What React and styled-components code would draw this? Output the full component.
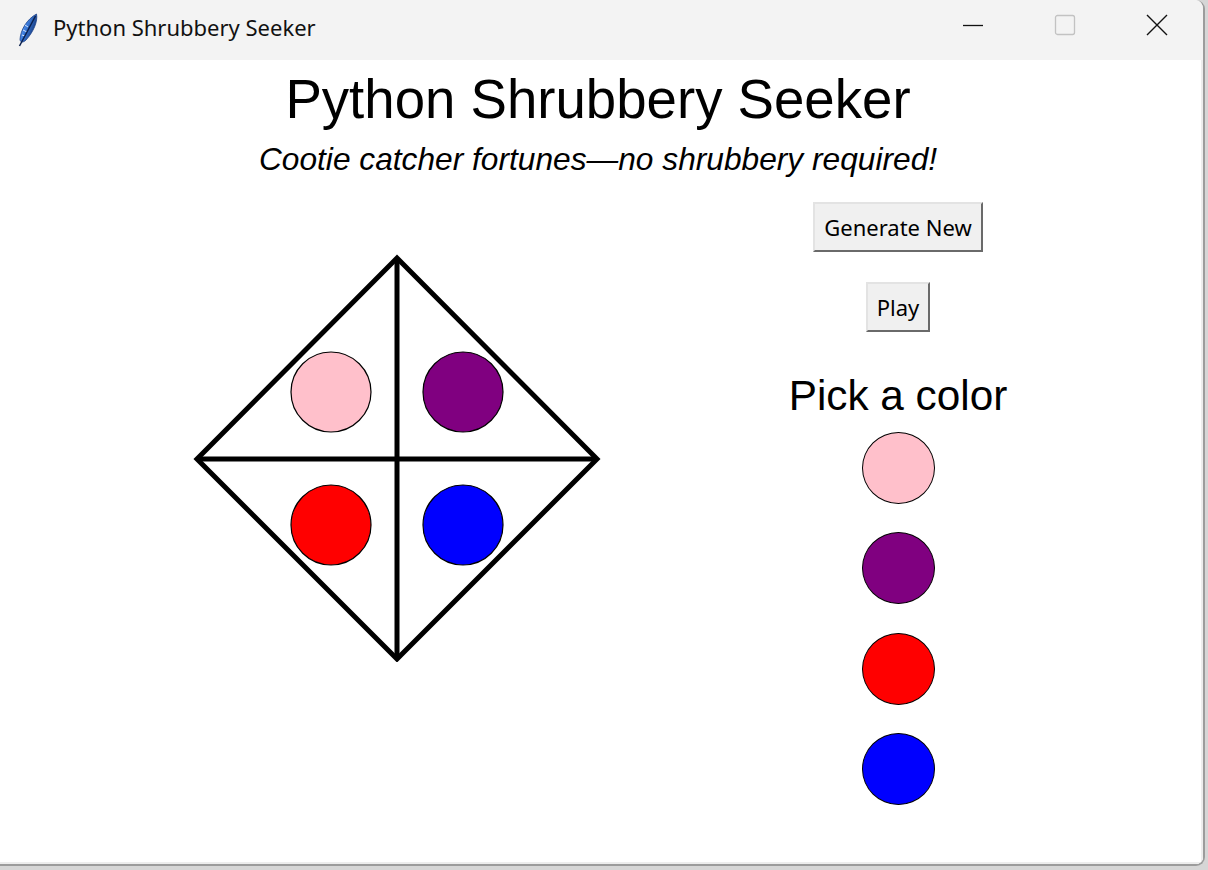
import React from "react";
import styled, { createGlobalStyle } from "styled-components";

const Global = createGlobalStyle`
  html, body { margin: 0; padding: 0; }
  body {
    width: 1208px;
    height: 870px;
    overflow: hidden;
    background: #d6d6d6;
    font-family: "Liberation Sans", Arial, sans-serif;
  }
`;

const Window = styled.div`
  width: 1203px;
  height: 864px;
  border-right: 2px solid #9c9c9c;
  border-bottom: 2px solid #9c9c9c;
  border-radius: 0 9px 9px 0;
  overflow: hidden;
  display: flex;
  flex-direction: column;
  background: #f3f3f3;
`;

const TitleBar = styled.div`
  height: 60px;
  flex: none;
  display: flex;
  align-items: center;
  background: #f3f3f3;
  padding-left: 16px;
`;

const TitleText = styled.span`
  font-family: "Noto Sans", "Open Sans", sans-serif;
  font-size: 22px;
  color: #111;
  margin-left: 15px;
  margin-top: -7px;
`;

const Controls = styled.div`
  margin-left: auto;
  display: flex;
  height: 100%;
`;

const Ctrl = styled.div`
  width: 92px;
  height: 100%;
  display: flex;
  align-items: center;
  justify-content: center;
  padding-bottom: 10px;
  box-sizing: border-box;
`;

const Client = styled.div`
  flex: 1;
  background: #ffffff;
  border-right: 2px solid #ededed;
  border-bottom: 2px solid #ededed;
  padding-right: 5px;
  display: flex;
  flex-direction: column;
  align-items: center;
`;

const Heading = styled.h1`
  margin: 9px 0 0 0;
  font-family: "Liberation Sans", Arial, sans-serif;
  font-weight: normal;
  font-size: 54.6px;
  line-height: 61px;
  color: #000;
`;

const Subtitle = styled.p`
  margin: 11px 0 0 0;
  font-family: "Liberation Sans", Arial, sans-serif;
  font-style: italic;
  font-size: 31.7px;
  line-height: 37px;
  color: #000;
`;

const Row = styled.div`
  align-self: stretch;
  display: flex;
  align-items: flex-start;
`;

const CanvasBox = styled.div`
  padding: 76px 0 0 193px;
`;

const Side = styled.div`
  margin-left: 147px;
  width: 300px;
  padding-top: 24px;
  display: flex;
  flex-direction: column;
  align-items: center;
`;

const TkButton = styled.button`
  height: 50px;
  box-sizing: border-box;
  padding: 0 9px;
  margin-top: ${(p) => p.$mt || 0}px;
  background: #f0f0f0;
  border: 2px solid;
  border-color: #e3e3e3 #6a6a6a #6a6a6a #e3e3e3;
  font-family: "Noto Sans", "Open Sans", sans-serif;
  font-size: 22px;
  color: #000;
  display: flex;
  align-items: center;
  justify-content: center;
  cursor: pointer;
`;

const PickLabel = styled.div`
  margin-top: 39px;
  font-family: "Liberation Sans", Arial, sans-serif;
  font-size: 42.3px;
  line-height: 49px;
  color: #000;
`;

const Swatches = styled.div`
  margin-top: 12px;
  display: flex;
  flex-direction: column;
  gap: 28.3px;
`;

const Swatch = styled.div`
  width: 73px;
  height: 72px;
  box-sizing: border-box;
  border-radius: 50%;
  border: 1px solid #000;
  background: ${(p) => p.$c};
`;

const Feather = () => (
  <svg width="22" height="34" viewBox="0 0 22 34">
    <defs>
      <linearGradient id="fg" x1="0" y1="0" x2="1" y2="0.6">
        <stop offset="0" stopColor="#9cc6ff" />
        <stop offset="0.45" stopColor="#3d7fe0" />
        <stop offset="1" stopColor="#10306f" />
      </linearGradient>
    </defs>
    <path
      d="M20.5 1 C 22 8, 17.5 19, 10 27 C 7.5 29.5, 4.5 30, 4 26.5 C 4.5 17, 11 6, 20.5 1 Z"
      fill="url(#fg)"
      stroke="#1b3f86"
      strokeWidth="0.8"
    />
    <path d="M9 12 L 12 14 M 7 17 L 11 19 M 6 22 L 9 23" stroke="#cfe2ff" strokeWidth="1" />
    <path d="M19.5 3 L 3.5 33" stroke="#0a1f4d" strokeWidth="1.5" fill="none" />
  </svg>
);

const Diamond = () => (
  <svg width="408" height="408" viewBox="0 0 408 408">
    <g stroke="#000" strokeWidth="5" fill="none">
      <polygon points="204,4 404,205 204,405 4,205" strokeLinejoin="miter" />
      <line x1="204" y1="4" x2="204" y2="405" />
      <line x1="4" y1="205" x2="404" y2="205" />
    </g>
    <g stroke="#000" strokeWidth="1.2">
      <circle cx="138" cy="138" r="40" fill="#ffc0cb" />
      <circle cx="270" cy="138" r="40" fill="#800080" />
      <circle cx="138" cy="271" r="40" fill="#ff0000" />
      <circle cx="270" cy="271" r="40" fill="#0000ff" />
    </g>
  </svg>
);

const colors = ["#ffc0cb", "#800080", "#ff0000", "#0000ff"];

export default function App() {
  return (
    <>
      <Global />
      <Window>
        <TitleBar>
          <Feather />
          <TitleText>Python Shrubbery Seeker</TitleText>
          <Controls>
            <Ctrl>
              <svg width="20" height="20" viewBox="0 0 20 20">
                <line x1="0" y1="10.5" x2="20" y2="10.5" stroke="#111" strokeWidth="1.3" />
              </svg>
            </Ctrl>
            <Ctrl>
              <svg width="22" height="22" viewBox="0 0 22 22">
                <rect x="1.5" y="1.5" width="19" height="19" rx="2" fill="none" stroke="#c2c2c2" strokeWidth="1.3" />
              </svg>
            </Ctrl>
            <Ctrl>
              <svg width="22" height="22" viewBox="0 0 22 22">
                <path d="M1 1 L21 21 M21 1 L1 21" stroke="#111" strokeWidth="1.4" />
              </svg>
            </Ctrl>
          </Controls>
        </TitleBar>
        <Client>
          <Heading>Python Shrubbery Seeker</Heading>
          <Subtitle>Cootie catcher fortunes—no shrubbery required!</Subtitle>
          <Row>
            <CanvasBox>
              <Diamond />
            </CanvasBox>
            <Side>
              <TkButton>Generate New</TkButton>
              <TkButton $mt={30}>Play</TkButton>
              <PickLabel>Pick a color</PickLabel>
              <Swatches>
                {colors.map((c) => (
                  <Swatch key={c} $c={c} />
                ))}
              </Swatches>
            </Side>
          </Row>
        </Client>
      </Window>
    </>
  );
}
